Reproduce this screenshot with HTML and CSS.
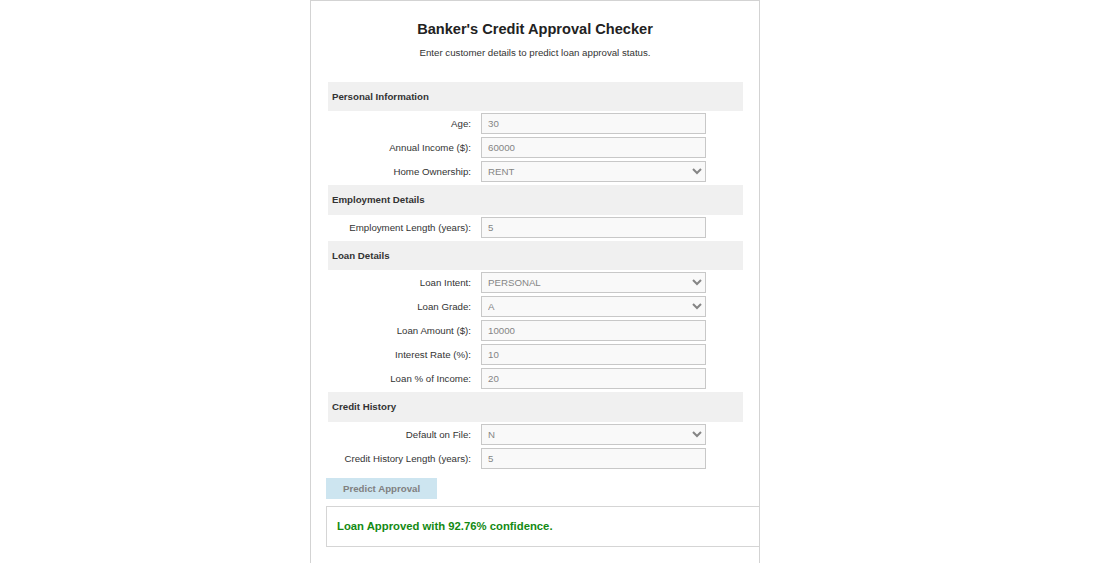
FILE: index.html
```html
<!DOCTYPE html>
<html lang="en">
<head>
<meta charset="utf-8">
<title>Banker's Credit Approval Checker</title>
<link rel="stylesheet" href="styles.css">
</head>
<body>
<div class="card">
  <h1 class="title">Banker's Credit Approval Checker</h1>
  <p class="subtitle">Enter customer details to predict loan approval status.</p>
  <form class="form">
    <div class="section">Personal Information</div>
    <div class="row"><label class="label">Age:</label><input class="field" type="text" value="30" disabled></div>
    <div class="row"><label class="label">Annual Income ($):</label><input class="field" type="text" value="60000" disabled></div>
    <div class="row"><label class="label">Home Ownership:</label><select class="field select" disabled><option>RENT</option></select></div>

    <div class="section">Employment Details</div>
    <div class="row"><label class="label">Employment Length (years):</label><input class="field" type="text" value="5" disabled></div>

    <div class="section">Loan Details</div>
    <div class="row"><label class="label">Loan Intent:</label><select class="field select" disabled><option>PERSONAL</option></select></div>
    <div class="row"><label class="label">Loan Grade:</label><select class="field select" disabled><option>A</option></select></div>
    <div class="row"><label class="label">Loan Amount ($):</label><input class="field" type="text" value="10000" disabled></div>
    <div class="row"><label class="label">Interest Rate (%):</label><input class="field" type="text" value="10" disabled></div>
    <div class="row"><label class="label">Loan % of Income:</label><input class="field" type="text" value="20" disabled></div>

    <div class="section">Credit History</div>
    <div class="row"><label class="label">Default on File:</label><select class="field select" disabled><option>N</option></select></div>
    <div class="row"><label class="label">Credit History Length (years):</label><input class="field" type="text" value="5" disabled></div>
  </form>
  <button class="predict" type="button" disabled>Predict Approval</button>
  <div class="result">Loan Approved with 92.76% confidence.</div>
</div>
</body>
</html>
```

FILE: styles.css
```css
html, body {
  margin: 0;
  padding: 0;
  background: #ffffff;
}

body {
  font-family: "Liberation Sans", Arial, sans-serif;
  color: #333333;
}

.card {
  box-sizing: border-box;
  width: 450px;
  margin: 0 0 0 310px;
  padding: 15px 15px 24px;
  border: 1px solid #d3d3d3;
  overflow: hidden;
  background: #ffffff;
}

.title {
  margin: 4px 0 0;
  font-size: 14.6px;
  line-height: 18px;
  font-weight: bold;
  text-align: center;
  color: #222222;
}

.subtitle {
  margin: 9px 0 0;
  font-size: 9.7px;
  line-height: 12px;
  text-align: center;
  color: #333333;
}

.form {
  margin: 22.5px 0 0;
  display: flex;
  flex-direction: column;
  gap: 2px;
}

.section {
  height: 29.5px;
  margin: 0 1px 0 2px;
  padding: 0 4px;
  display: flex;
  align-items: center;
  background: #f0f0f0;
  font-size: 9.7px;
  font-weight: bold;
  color: #333333;
}

.row {
  height: 22px;
  padding-left: 2px;
  display: grid;
  grid-template-columns: 143px 225px;
  column-gap: 10px;
  align-items: start;
}

.label {
  height: 21px;
  display: flex;
  align-items: center;
  justify-content: flex-end;
  font-size: 9.7px;
  color: #333333;
}

.field {
  box-sizing: border-box;
  width: 225px;
  height: 21px;
  margin: 0;
  padding: 0 6px;
  border: 1px solid #c8c8c8;
  border-radius: 0;
  background-color: #f9f9f9;
  font-family: "Liberation Sans", Arial, sans-serif;
  font-size: 9.7px;
  color: #858585;
  opacity: 1;
}

.select {
  padding-left: 2px;
}

.predict {
  display: block;
  margin: 8px 0 0;
  height: 21px;
  padding: 0 17px;
  border: none;
  border-radius: 0;
  background: #cde5f0;
  font-family: "Liberation Sans", Arial, sans-serif;
  font-size: 9.7px;
  font-weight: bold;
  color: #808080;
}

.result {
  width: 100%;
  margin-top: 7px;
  padding: 13px 10px;
  border: 1px solid #d5d5d5;
  font-size: 11.3px;
  line-height: 13px;
  font-weight: bold;
  color: #138a13;
}
```
